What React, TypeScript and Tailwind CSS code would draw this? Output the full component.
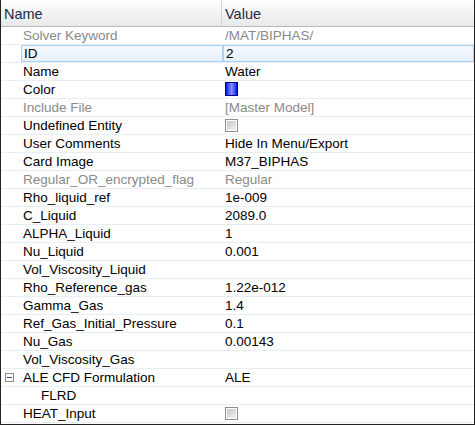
import React from 'react';

type Row = {
  label: string;
  value?: string;
  kind?: 'text' | 'color' | 'check';
  muted?: boolean;
  selected?: boolean;
  indent?: number;
  group?: boolean;
};

const rows: Row[] = [
  { label: 'Solver Keyword', value: '/MAT/BIPHAS/', muted: true },
  { label: 'ID', value: '2', selected: true },
  { label: 'Name', value: 'Water' },
  { label: 'Color', kind: 'color' },
  { label: 'Include File', value: '[Master Model]', muted: true },
  { label: 'Undefined Entity', kind: 'check' },
  { label: 'User Comments', value: 'Hide In Menu/Export' },
  { label: 'Card Image', value: 'M37_BIPHAS' },
  { label: 'Regular_OR_encrypted_flag', value: 'Regular', muted: true },
  { label: 'Rho_liquid_ref', value: '1e-009' },
  { label: 'C_Liquid', value: '2089.0' },
  { label: 'ALPHA_Liquid', value: '1' },
  { label: 'Nu_Liquid', value: '0.001' },
  { label: 'Vol_Viscosity_Liquid', value: '' },
  { label: 'Rho_Reference_gas', value: '1.22e-012' },
  { label: 'Gamma_Gas', value: '1.4' },
  { label: 'Ref_Gas_Initial_Pressure', value: '0.1' },
  { label: 'Nu_Gas', value: '0.00143' },
  { label: 'Vol_Viscosity_Gas', value: '' },
  { label: 'ALE CFD Formulation', value: 'ALE', group: true },
  { label: 'FLRD', value: '', indent: 1 },
  { label: 'HEAT_Input', kind: 'check' },
];

function CheckBox() {
  return (
    <div className="w-[13px] h-[13px] border border-[#8f8f8f] bg-white p-[1px]">
      <div className="w-full h-full bg-gradient-to-br from-[#c4c4c4] to-[#f4f4f4]" />
    </div>
  );
}

function ColorSwatch() {
  return (
    <div className="w-[13px] h-[14px] border border-[#00008a] bg-gradient-to-r from-[#0000e0] via-[#8a8aff] to-[#0000e0]" />
  );
}

function PropRow({ row }: { row: Row }) {
  const text = row.muted ? 'text-[#8a8a8a]' : 'text-black';
  const sel = row.selected;
  return (
    <div className="flex h-[18px] border-b border-[#e6eff4] text-[13.5px] leading-[17px]">
      <div className="relative w-[20px] shrink-0">
        {row.group && (
          <div className="absolute left-[4px] top-[4px] w-[9px] h-[9px] border border-[#8c8c8c] bg-white flex items-center justify-center">
            <div className="w-[5px] h-px bg-[#2a4f8a]" />
          </div>
        )}
      </div>
      <div
        className={`w-[202px] shrink-0 pl-[2px] whitespace-nowrap overflow-hidden ${text} ${
          sel ? 'border border-[#a9d0f5] bg-gradient-to-b from-[#f5f9fe] to-[#e7f0fa] leading-[15px]' : ''
        }`}
        style={row.indent ? { paddingLeft: 2 + row.indent * 18 } : undefined}
      >
        {row.label}
      </div>
      <div
        className={`flex-1 pl-[2px] whitespace-nowrap ${text} ${
          sel ? 'border border-[#a9d0f5] bg-gradient-to-b from-[#f5f9fe] to-[#e7f0fa] leading-[15px]' : ''
        }`}
      >
        {row.kind === 'color' ? (
          <div className="pt-[1px]"><ColorSwatch /></div>
        ) : row.kind === 'check' ? (
          <div className="pt-[2px]"><CheckBox /></div>
        ) : (
          row.value
        )}
      </div>
    </div>
  );
}

export default function App() {
  return (
    <div
      className="w-[475px] h-[425px] bg-white border-l border-r border-b border-[#222] overflow-hidden"
      style={{ fontFamily: '"Liberation Sans", Arial, sans-serif' }}
    >
      <div className="flex h-[27px] border-b border-[#b9b9b9] bg-gradient-to-b from-[#fdfdfd] to-[#e9e9e9] text-[14.5px] text-[#1a2b4a]">
        <div className="w-[221px] shrink-0 pl-[3px] pt-[4px] border-r border-[#d2d2d2]">Name</div>
        <div className="flex-1 pl-[3px] pt-[4px]">Value</div>
      </div>
      {rows.map(r => (
        <PropRow key={r.label} row={r} />
      ))}
    </div>
  );
}
